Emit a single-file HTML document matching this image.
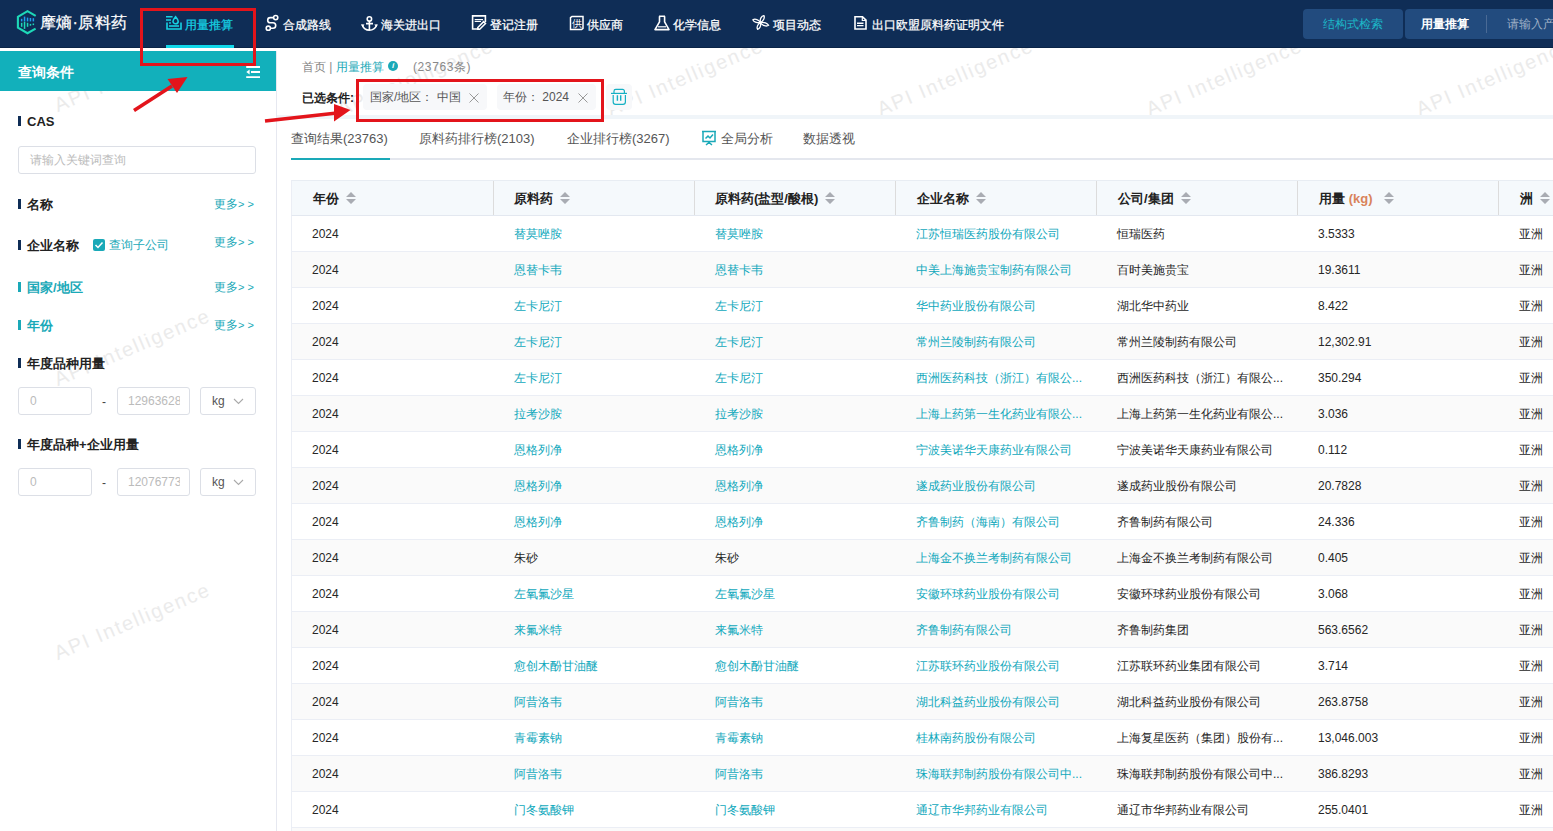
<!DOCTYPE html>
<html><head><meta charset="utf-8">
<style>
*{box-sizing:border-box;margin:0;padding:0}
html,body{width:1553px;height:831px;overflow:hidden;background:#fff}
body{position:relative;font-family:"Liberation Sans",sans-serif;color:#333;font-size:12px}
.abs{position:absolute}
#nav{position:absolute;z-index:5;left:0;top:0;width:1553px;height:48px;background:#0f2d56;border-bottom:1px solid #0a2447}
.ni{position:absolute;top:18px;font-size:12px;color:#fff;line-height:14px;white-space:nowrap;-webkit-text-stroke:0.25px currentColor}
.nic{position:absolute;top:15px}
.rbtn{position:absolute;top:9px;height:30px;background:#224b7e;border-radius:4px;color:#fff;font-size:13px;line-height:30px}
#side{position:absolute;left:0;top:51px;width:277px;height:780px;border-right:1px solid #e6e8f0;background:#fff}
#sideh{position:absolute;left:0;top:51px;width:276px;height:40px;background:#12b0bb}
.lab{position:absolute;left:18px;font-size:13px;font-weight:bold;color:#222;line-height:15px;white-space:nowrap}
.lab::before{content:"";position:absolute;left:0;top:2px;width:3px;height:10px;background:#0f2d56}
.lab span{padding-left:9px}
.lab.t{color:#1aa9b8}
.lab.t::before{background:#1aa9b8}
.more{position:absolute;left:214px;font-size:12px;color:#1aa9b8;line-height:14px;white-space:nowrap}
.inp{position:absolute;border:1px solid #dcdfe6;border-radius:3px;background:#fff;color:#aaa;font-size:12px;white-space:nowrap;overflow:hidden}
.wm{position:absolute;font-family:"Liberation Sans",sans-serif;font-size:20px;letter-spacing:1.8px;color:#ebebeb;white-space:nowrap;transform-origin:0 100%;transform:rotate(-23deg);line-height:20px}
.tab{position:absolute;top:131px;font-size:13px;color:#555;line-height:16px;white-space:nowrap}
.th{position:absolute;top:180px;left:291px;width:1262px;height:36px;background:#f5f9fc;border-top:1px solid #e8edf3;border-bottom:1px solid #e3e8f0;border-left:1px solid #ebeef5}
.thc{position:absolute;top:0;height:34px;border-left:1px solid #dcdcdc}
.tht{position:absolute;top:10px;font-size:13px;font-weight:bold;color:#222;line-height:15px;white-space:nowrap}
.sort{display:inline-block;vertical-align:top;margin-left:7px;width:10px;height:12px;position:relative;top:1px}
.tr{position:absolute;left:291px;width:1262px;height:36px;background:#fff;border-bottom:1px solid #ebeef5;border-left:1px solid #ebeef5}
.tr.e{background:#fafafa}
.c{position:absolute;top:11px;font-size:12px;line-height:14px;color:#262626;white-space:nowrap}
.c.k{color:#10a8bc}
.c1{left:20px}.c2{left:222px}.c3{left:423px}.c4{left:624px}.c5{left:825px}.c6{left:1026px}.c7{left:1227px}
</style></head><body>
<div id="nav">
  <!-- logo -->
  <svg class="abs" style="left:12px;top:8px" width="30" height="30" viewBox="12 8 30 30">
    <path d="M35.7 15.9L27.5 11.2L17.9 16.8V27.6L27.5 33.2L35.6 28.6" fill="none" stroke="#1ed8b8" stroke-width="2.1"/>
    <g fill="#1e9ff0"><rect x="20.9" y="18.8" width="1.5" height="2.6"/><rect x="23.8" y="16.6" width="1.5" height="4.8"/><rect x="26.8" y="17.6" width="1.5" height="3.8"/><rect x="29.7" y="18" width="1.5" height="3.4"/><rect x="32.6" y="18.2" width="1.5" height="3.2"/></g>
    <g fill="#1ed8b8"><rect x="20.9" y="22.8" width="1.5" height="4"/><rect x="23.8" y="21.7" width="1.5" height="7.2"/><rect x="26.8" y="22.8" width="1.5" height="4"/><rect x="29.7" y="23.9" width="1.5" height="1.8"/><rect x="32.6" y="23.5" width="1.5" height="1.6"/></g>
  </svg>
  <div class="ni" style="left:40px;top:13px;font-size:16px;line-height:20px;letter-spacing:0.3px">摩熵·原料药</div>
  <!-- active -->
  <svg class="abs" style="left:0;top:0" width="1000" height="48" viewBox="0 0 1000 48">
    <g fill="none" stroke="#16d2e4" stroke-width="1.6">
      <path d="M166 16.8H172.6M166 20H171"/>
      
      <path d="M167 22.5V29H181V22.5"/>
      <path d="M169 26H179"/>
      <path d="M175.6 16.7C177.2 18.6 178.2 19.8 178.2 21.2A2.6 2.6 0 0 1 173 21.2C173 19.8 174 18.6 175.6 16.7Z"/>
    </g>
    <rect x="169" y="22.3" width="2" height="1.3" fill="#16d2e4"/>
    <g fill="none" stroke="#fff" stroke-width="1.6">
      <circle cx="275.7" cy="17.6" r="2.1"/>
      <circle cx="268.3" cy="28.2" r="2.1"/>
      <path d="M273.6 17.6H270.3A2.6 2.6 0 0 0 270.3 22.8H273A2.7 2.7 0 0 1 273 28.2H270.4"/>
    </g>
    <g fill="none" stroke="#fff" stroke-width="1.6">
      <circle cx="369.4" cy="18.9" r="2.2"/>
      <path d="M369.4 21.1V30.5M366 23.6H373M362.3 25C363.5 28.5 366.5 30.2 369.4 30.2C372.3 30.2 375.3 28.5 376.8 25"/>
    </g>
    <path d="M361 24.3L364.5 24.6L362.5 27.2Z M377.8 24.3L374.3 24.6L376.3 27.2Z" fill="#fff"/>
    <g fill="none" stroke="#fff" stroke-width="1.6">
      <path d="M479 29H472.6V15.9H485.4V22"/>
      <path d="M474.7 19.6H483M474.7 21.5H481" stroke-width="1.1"/>
      <path d="M485.5 23.5L479.7 29.3L477.8 29.3L477.8 27.5L483.6 21.6Z" stroke-width="1.5"/>
    </g>
    <path d="M570.5 17.6L572 16.4H583V28.4L581.6 29.6H570.5Z" fill="none" stroke="#fff" stroke-width="1.5"/>
    <text x="571.6" y="27.4" font-size="10" fill="#fff" font-family="Liberation Sans, sans-serif">供</text>
    <g fill="none" stroke="#fff" stroke-width="1.6" stroke-linejoin="round">
      <path d="M659 16.2H665M659.5 16.2V21.8L655 29.6H669L664.6 21.8V16.2"/>
      <path d="M658 26.8H666" stroke-width="1.2"/>
    </g>
    <g fill="none" stroke="#fff" stroke-width="1.3">
      <path d="M760.5 22.6C759.5 19 761.5 16 763.9 15.6C765 17.5 763.5 21 760.5 22.6Z"/>
      <path d="M760.5 22.6C756.8 23.2 753.3 21.5 752.9 19.8C755 18.4 758.8 19.6 760.5 22.6Z"/>
      <path d="M760.5 22.6C764 21.6 767.6 23.5 768.6 25.3C766.5 26.8 762.5 25.8 760.5 22.6Z"/>
      <path d="M760.5 22.6C761.3 25.8 759.7 28.8 757.6 29.3C756.3 27.5 757.5 24.2 760.5 22.6Z"/>
    </g>
    <g fill="none" stroke="#fff" stroke-width="1.6">
      <path d="M855 16.7H862.5L866 20.2V29H855Z"/>
      <path d="M862.3 16.8V20.5H866" stroke-width="1.2"/>
      <path d="M857 23.3H863.5M857 25.6H863.5" stroke-width="1.4"/>
    </g>
  </svg>
  <div class="ni" style="left:185px;color:#16d2e4">用量推算</div>
  <div class="abs" style="left:166px;top:45px;width:68px;height:3px;background:#12d8ea"></div>
  <div class="ni" style="left:283px">合成路线</div>
  <div class="ni" style="left:381px">海关进出口</div>
  <div class="ni" style="left:490px">登记注册</div>
  <div class="ni" style="left:587px">供应商</div>
  <div class="ni" style="left:673px">化学信息</div>
  <div class="ni" style="left:773px">项目动态</div>
  <div class="ni" style="left:872px">出口欧盟原料药证明文件</div>
  <div class="rbtn" style="left:1303px;width:100px;color:#1cb8c8;text-align:center;font-size:12px">结构式检索</div>
  <div class="rbtn" style="left:1405px;width:200px;border-radius:4px 0 0 4px">
    <span class="abs" style="left:16px;top:0;font-weight:bold;font-size:12px">用量推算</span>
    <span class="abs" style="left:81px;top:6px;width:1px;height:18px;background:#4a6a95"></span>
    <span class="abs" style="left:102px;top:0;color:#9fb0c6;font-size:12px">请输入产品</span>
  </div>
</div>

<!-- sidebar -->
<div id="side"></div>
<div class="wm" style="left:59px;top:95px">API Intelligence</div>
<div class="wm" style="left:59px;top:369px">API Intelligence</div>
<div class="wm" style="left:59px;top:643px">API Intelligence</div>
<div class="wm" style="left:59px;top:917px">API Intelligence</div>
<div class="abs" style="left:0;top:48px;width:277px;height:3px;background:#fff"></div>
<div id="sideh">
  <div class="abs" style="left:18px;top:13px;font-size:14px;font-weight:bold;color:#fff;line-height:16px">查询条件</div>
  <svg class="abs" style="left:240px;top:11px" width="26" height="26" viewBox="240 62 26 26"><path d="M246.2 67H260M251 72H260M246.2 77.2H260" stroke="#fff" stroke-width="1.8"/><path d="M246.3 72L249.6 69.6V74.4Z" fill="#fff"/></svg>
</div>
<div class="lab" style="top:114px"><span>CAS</span></div>
<div class="inp" style="left:18px;top:146px;width:238px;height:28px;line-height:26px;padding-left:11px;color:#bbb">请输入关键词查询</div>
<div class="lab" style="top:197px"><span>名称</span></div>
<div class="more" style="top:197px">更多<span style="letter-spacing:3px;font-size:11px">&gt;&gt;</span></div>
<div class="lab" style="top:238px"><span>企业名称</span></div>
<div class="abs" style="left:93px;top:239px;width:12px;height:12px;background:#1aa9b8;border-radius:2px"><svg width="12" height="12" viewBox="0 0 12 12" style="position:absolute;left:0;top:0"><path d="M2.5 6L5 8.5L9.5 3.5" fill="none" stroke="#fff" stroke-width="1.5"/></svg></div>
<div class="abs" style="left:109px;top:238px;font-size:12px;color:#1aa9b8;line-height:14px">查询子公司</div>
<div class="more" style="top:235px">更多<span style="letter-spacing:3px;font-size:11px">&gt;&gt;</span></div>
<div class="lab t" style="top:280px"><span>国家/地区</span></div>
<div class="more" style="top:280px">更多<span style="letter-spacing:3px;font-size:11px">&gt;&gt;</span></div>
<div class="lab t" style="top:318px"><span>年份</span></div>
<div class="more" style="top:318px">更多<span style="letter-spacing:3px;font-size:11px">&gt;&gt;</span></div>
<div class="lab" style="top:356px"><span>年度品种用量</span></div>
<div class="inp" style="left:18px;top:387px;width:74px;height:28px;line-height:26px;padding-left:11px;color:#bbb">0</div>
<div class="abs" style="left:102px;top:395px;font-size:12px;color:#444">-</div>
<div class="inp" style="left:117px;top:387px;width:73px;height:28px;line-height:26px;padding-left:10px;color:#bbb"><span style="display:block;width:52px;overflow:hidden">12963628</span></div>
<div class="inp" style="left:200px;top:387px;width:56px;height:28px;line-height:26px;padding-left:11px;color:#555">kg<svg class="abs" style="left:32px;top:10px" width="11" height="7" viewBox="0 0 11 7"><path d="M1 1L5.5 5.5L10 1" fill="none" stroke="#aaa" stroke-width="1.1"/></svg></div>
<div class="lab" style="top:437px"><span>年度品种+企业用量</span></div>
<div class="inp" style="left:18px;top:468px;width:74px;height:28px;line-height:26px;padding-left:11px;color:#bbb">0</div>
<div class="abs" style="left:102px;top:476px;font-size:12px;color:#444">-</div>
<div class="inp" style="left:117px;top:468px;width:73px;height:28px;line-height:26px;padding-left:10px;color:#bbb"><span style="display:block;width:52px;overflow:hidden">12076773</span></div>
<div class="inp" style="left:200px;top:468px;width:56px;height:28px;line-height:26px;padding-left:11px;color:#555">kg<svg class="abs" style="left:32px;top:10px" width="11" height="7" viewBox="0 0 11 7"><path d="M1 1L5.5 5.5L10 1" fill="none" stroke="#aaa" stroke-width="1.1"/></svg></div>

<!-- main watermarks -->
<div class="wm" style="left:342px;top:99px">API Intelligence</div>
<div class="wm" style="left:612px;top:99px">API Intelligence</div>
<div class="wm" style="left:882px;top:99px">API Intelligence</div>
<div class="wm" style="left:1151px;top:99px">API Intelligence</div>
<div class="wm" style="left:1421px;top:99px">API Intelligence</div>

<!-- breadcrumb -->
<div class="abs" style="left:302px;top:60px;font-size:12px;line-height:14px;color:#888;white-space:nowrap">首页 | <span style="color:#1aa9b8">用量推算</span></div>
<div class="abs" style="left:388px;top:61px;width:10px;height:10px;border-radius:50%;background:#1aa9b8;color:#fff;font-size:8px;line-height:10px;text-align:center;font-style:italic;font-weight:bold">i</div>
<div class="abs" style="left:413px;top:60px;font-size:12px;line-height:14px;color:#888;white-space:nowrap;letter-spacing:0.6px">(23763条)</div>
<div class="abs" style="left:302px;top:91px;font-size:12px;font-weight:bold;line-height:14px;color:#222;white-space:nowrap">已选条件:</div>
<div class="abs" style="left:363px;top:84px;width:124px;height:26px;background:#f7f8fa;border-radius:4px"></div>
<div class="abs" style="left:370px;top:90px;font-size:12px;line-height:14px;color:#555;white-space:nowrap">国家/地区：&nbsp;中国</div>
<svg class="abs" style="left:469px;top:93px" width="10" height="10" viewBox="0 0 10 10"><path d="M0.5 0.5L9.5 9.5M9.5 0.5L0.5 9.5" stroke="#999" stroke-width="1"/></svg>
<div class="abs" style="left:497px;top:84px;width:99px;height:26px;background:#f7f8fa;border-radius:4px"></div>
<div class="abs" style="left:503px;top:90px;font-size:12px;line-height:14px;color:#555;white-space:nowrap">年份：&nbsp;2024</div>
<svg class="abs" style="left:578px;top:93px" width="10" height="10" viewBox="0 0 10 10"><path d="M0.5 0.5L9.5 9.5M9.5 0.5L0.5 9.5" stroke="#999" stroke-width="1"/></svg>
<div class="abs" style="left:606px;top:84px;width:26px;height:26px;background:#f7f8fa;border-radius:4px"></div>
<svg class="abs" style="left:606px;top:84px" width="26" height="26" viewBox="606 84 26 26"><g fill="none" stroke="#15b0c3" stroke-width="1.2"><path d="M611 93.4H627"/><path d="M614 93.2V91.2A1.8 1.8 0 0 1 615.8 89.4H622.6A1.8 1.8 0 0 1 624.4 91.2V93.2"/><path d="M613.2 95V102A2.4 2.4 0 0 0 615.6 104.4H623A2.4 2.4 0 0 0 625.4 102V95"/><path d="M617.4 95.2V100.8M620.7 95.2V100.8" stroke-width="1.4"/></g></svg>
<div class="abs" style="left:277px;top:115px;width:1276px;height:4px;background:#f0f5f9"></div>

<!-- tabs -->
<div class="abs" style="left:291px;top:158px;width:1262px;height:2px;background:#e4e7ee"></div>
<div class="abs" style="left:291px;top:158px;width:99px;height:2px;background:#1aa9b8"></div>
<div class="tab" style="left:291px">查询结果(23763)</div>
<div class="tab" style="left:419px">原料药排行榜(2103)</div>
<div class="tab" style="left:567px">企业排行榜(3267)</div>
<svg class="abs" style="left:701px;top:130px" width="16" height="16" viewBox="0 0 16 16"><path d="M1 1.5H15M2 1.5V11.5H14V1.5M8 11.5V14M5 15L8 12.5L11 15M4.5 8.5L7 6L9 8L12 4.5" fill="none" stroke="#1aa9b8" stroke-width="1.5"/></svg>
<div class="tab" style="left:721px">全局分析</div>
<div class="tab" style="left:803px">数据透视</div>

<!-- table -->
<div class="th">
  <div class="thc" style="left:201px"></div><div class="thc" style="left:402px"></div><div class="thc" style="left:603px"></div><div class="thc" style="left:804px"></div><div class="thc" style="left:1005px"></div><div class="thc" style="left:1206px"></div>
  <div class="tht" style="left:21px">年份<svg class="sort" viewBox="0 0 10 12"><path d="M5 0L10 5H0Z M5 12L10 7H0Z" fill="#a9acb3"/></svg></div>
  <div class="tht" style="left:222px">原料药<svg class="sort" viewBox="0 0 10 12"><path d="M5 0L10 5H0Z M5 12L10 7H0Z" fill="#a9acb3"/></svg></div>
  <div class="tht" style="left:423px">原料药(盐型/酸根)<svg class="sort" viewBox="0 0 10 12"><path d="M5 0L10 5H0Z M5 12L10 7H0Z" fill="#a9acb3"/></svg></div>
  <div class="tht" style="left:625px">企业名称<svg class="sort" viewBox="0 0 10 12"><path d="M5 0L10 5H0Z M5 12L10 7H0Z" fill="#a9acb3"/></svg></div>
  <div class="tht" style="left:826px">公司/集团<svg class="sort" viewBox="0 0 10 12"><path d="M5 0L10 5H0Z M5 12L10 7H0Z" fill="#a9acb3"/></svg></div>
  <div class="tht" style="left:1027px">用量 <span style="color:#d9835a">(kg)</span><svg class="sort" style="margin-left:12px" viewBox="0 0 10 12"><path d="M5 0L10 5H0Z M5 12L10 7H0Z" fill="#a9acb3"/></svg></div>
  <div class="tht" style="left:1228px">洲<svg class="sort" viewBox="0 0 10 12"><path d="M5 0L10 5H0Z M5 12L10 7H0Z" fill="#a9acb3"/></svg></div>
</div>
<div class="tr " style="top:216px"><span class="c c1">2024</span><span class="c c2 k">替莫唑胺</span><span class="c c3 k">替莫唑胺</span><span class="c c4 k">江苏恒瑞医药股份有限公司</span><span class="c c5">恒瑞医药</span><span class="c c6">3.5333</span><span class="c c7">亚洲</span></div>
<div class="tr e" style="top:252px"><span class="c c1">2024</span><span class="c c2 k">恩替卡韦</span><span class="c c3 k">恩替卡韦</span><span class="c c4 k">中美上海施贵宝制药有限公司</span><span class="c c5">百时美施贵宝</span><span class="c c6">19.3611</span><span class="c c7">亚洲</span></div>
<div class="tr " style="top:288px"><span class="c c1">2024</span><span class="c c2 k">左卡尼汀</span><span class="c c3 k">左卡尼汀</span><span class="c c4 k">华中药业股份有限公司</span><span class="c c5">湖北华中药业</span><span class="c c6">8.422</span><span class="c c7">亚洲</span></div>
<div class="tr e" style="top:324px"><span class="c c1">2024</span><span class="c c2 k">左卡尼汀</span><span class="c c3 k">左卡尼汀</span><span class="c c4 k">常州兰陵制药有限公司</span><span class="c c5">常州兰陵制药有限公司</span><span class="c c6">12,302.91</span><span class="c c7">亚洲</span></div>
<div class="tr " style="top:360px"><span class="c c1">2024</span><span class="c c2 k">左卡尼汀</span><span class="c c3 k">左卡尼汀</span><span class="c c4 k">西洲医药科技（浙江）有限公...</span><span class="c c5">西洲医药科技（浙江）有限公...</span><span class="c c6">350.294</span><span class="c c7">亚洲</span></div>
<div class="tr e" style="top:396px"><span class="c c1">2024</span><span class="c c2 k">拉考沙胺</span><span class="c c3 k">拉考沙胺</span><span class="c c4 k">上海上药第一生化药业有限公...</span><span class="c c5">上海上药第一生化药业有限公...</span><span class="c c6">3.036</span><span class="c c7">亚洲</span></div>
<div class="tr " style="top:432px"><span class="c c1">2024</span><span class="c c2 k">恩格列净</span><span class="c c3 k">恩格列净</span><span class="c c4 k">宁波美诺华天康药业有限公司</span><span class="c c5">宁波美诺华天康药业有限公司</span><span class="c c6">0.112</span><span class="c c7">亚洲</span></div>
<div class="tr e" style="top:468px"><span class="c c1">2024</span><span class="c c2 k">恩格列净</span><span class="c c3 k">恩格列净</span><span class="c c4 k">遂成药业股份有限公司</span><span class="c c5">遂成药业股份有限公司</span><span class="c c6">20.7828</span><span class="c c7">亚洲</span></div>
<div class="tr " style="top:504px"><span class="c c1">2024</span><span class="c c2 k">恩格列净</span><span class="c c3 k">恩格列净</span><span class="c c4 k">齐鲁制药（海南）有限公司</span><span class="c c5">齐鲁制药有限公司</span><span class="c c6">24.336</span><span class="c c7">亚洲</span></div>
<div class="tr e" style="top:540px"><span class="c c1">2024</span><span class="c c2 ">朱砂</span><span class="c c3 ">朱砂</span><span class="c c4 k">上海金不换兰考制药有限公司</span><span class="c c5">上海金不换兰考制药有限公司</span><span class="c c6">0.405</span><span class="c c7">亚洲</span></div>
<div class="tr " style="top:576px"><span class="c c1">2024</span><span class="c c2 k">左氧氟沙星</span><span class="c c3 k">左氧氟沙星</span><span class="c c4 k">安徽环球药业股份有限公司</span><span class="c c5">安徽环球药业股份有限公司</span><span class="c c6">3.068</span><span class="c c7">亚洲</span></div>
<div class="tr e" style="top:612px"><span class="c c1">2024</span><span class="c c2 k">来氟米特</span><span class="c c3 k">来氟米特</span><span class="c c4 k">齐鲁制药有限公司</span><span class="c c5">齐鲁制药集团</span><span class="c c6">563.6562</span><span class="c c7">亚洲</span></div>
<div class="tr " style="top:648px"><span class="c c1">2024</span><span class="c c2 k">愈创木酚甘油醚</span><span class="c c3 k">愈创木酚甘油醚</span><span class="c c4 k">江苏联环药业股份有限公司</span><span class="c c5">江苏联环药业集团有限公司</span><span class="c c6">3.714</span><span class="c c7">亚洲</span></div>
<div class="tr e" style="top:684px"><span class="c c1">2024</span><span class="c c2 k">阿昔洛韦</span><span class="c c3 k">阿昔洛韦</span><span class="c c4 k">湖北科益药业股份有限公司</span><span class="c c5">湖北科益药业股份有限公司</span><span class="c c6">263.8758</span><span class="c c7">亚洲</span></div>
<div class="tr " style="top:720px"><span class="c c1">2024</span><span class="c c2 k">青霉素钠</span><span class="c c3 k">青霉素钠</span><span class="c c4 k">桂林南药股份有限公司</span><span class="c c5">上海复星医药（集团）股份有...</span><span class="c c6">13,046.003</span><span class="c c7">亚洲</span></div>
<div class="tr e" style="top:756px"><span class="c c1">2024</span><span class="c c2 k">阿昔洛韦</span><span class="c c3 k">阿昔洛韦</span><span class="c c4 k">珠海联邦制药股份有限公司中...</span><span class="c c5">珠海联邦制药股份有限公司中...</span><span class="c c6">386.8293</span><span class="c c7">亚洲</span></div>
<div class="tr " style="top:792px"><span class="c c1">2024</span><span class="c c2 k">门冬氨酸钾</span><span class="c c3 k">门冬氨酸钾</span><span class="c c4 k">通辽市华邦药业有限公司</span><span class="c c5">通辽市华邦药业有限公司</span><span class="c c6">255.0401</span><span class="c c7">亚洲</span></div>
<div class="tr e" style="top:828px"><span class="c c1"></span><span class="c c2 k"></span><span class="c c3 k"></span><span class="c c4 k"></span><span class="c c5"></span><span class="c c6"></span><span class="c c7"></span></div>

<!-- annotations -->
<div class="abs" style="left:140px;top:8px;width:116px;height:58px;border:3px solid #e3141b;z-index:10"></div>
<div class="abs" style="left:356px;top:79px;width:248px;height:43px;border:3px solid #e3141b"></div>
<svg class="abs" style="left:0;top:0;z-index:10" width="1553" height="831" viewBox="0 0 1553 831">
  <path d="M134 110.5L172 86" stroke="#e3141b" stroke-width="3.6"/>
  <path d="M187.5 77L167.5 79L177 93Z" fill="#e3141b"/>
  <path d="M265 121L337 113" stroke="#e3141b" stroke-width="3.6"/>
  <path d="M350.5 110L334 104L334 121.5Z" fill="#e3141b"/>
</svg>
</body></html>
